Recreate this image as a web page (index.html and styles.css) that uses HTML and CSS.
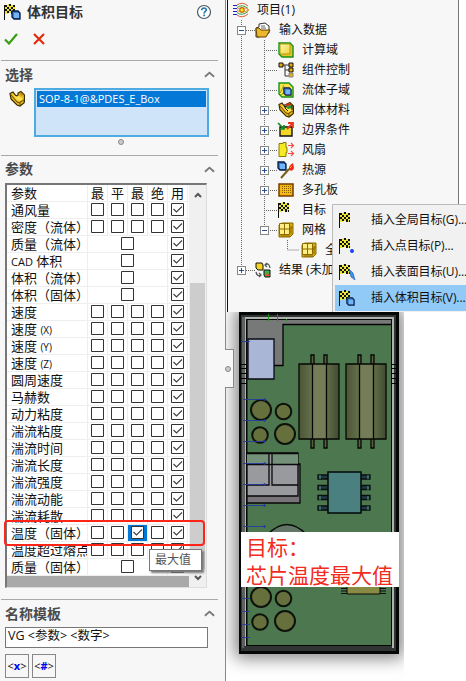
FILE: index.html
```html
<!DOCTYPE html>
<html lang="zh-CN">
<head>
<meta charset="utf-8">
<title>体积目标</title>
<link rel="stylesheet" href="styles.css">
</head>
<body>
<svg width="0" height="0" class="defs">
  <defs>
    <pattern id="dots" width="2" height="2" patternUnits="userSpaceOnUse"><rect width="2" height="2" fill="#f5bd19"/><path d="M0 0h1v1H0z" fill="#8a5c00"/></pattern>
    <linearGradient id="coil"><stop offset="0" stop-color="#4b5534"/><stop offset=".33" stop-color="#65704c"/><stop offset=".34" stop-color="#747d58"/><stop offset=".66" stop-color="#747d58"/><stop offset=".67" stop-color="#65704c"/><stop offset="1" stop-color="#414b30"/></linearGradient>
    <linearGradient id="yellow" x2="1" y2="1"><stop offset="0" stop-color="#fffab0"/><stop offset="1" stop-color="#f0d23c"/></linearGradient>
    <symbol id="flag" viewBox="0 0 16 16"><path d="M1 1h3V0h3v1h4v9H7V9H4v1H1z" fill="#efe63c"/><path d="M1 1h2v2H1zM5 0h2v2H5zM9 1h2v2H9zM3 3h2v2H3zM7 3h2v2H7zM1 5h2v2H1zM5 5h2v2H5zM9 5h2v2H9zM3 7h2v2H3zM7 7h2v3H7zM10 8h1v2h-1z" fill="#111"/><path d="M.5 1v15" stroke="#111"/></symbol>
    <symbol id="cube" viewBox="0 0 10 10"><path d="M1 1h6l2 2v6H3L1 7z" fill="#3a7ed0" stroke="#071b42" stroke-width="1.3"/><path d="M3 3h5v5H3z" fill="#72b4f4"/></symbol>
    <symbol id="part" viewBox="0 0 16 16"><path d="M1 2.500L4 1l3 4 2-1V2l3-1.500L15.500 4v6L15 12l-4 3-3-1-6-6z" fill="#e6b61d" stroke="#392b00" stroke-width="1.200"/><path d="M2 4l6 7 3 1M11 14v-3l4-2" fill="none" stroke="#6b4c00"/><path d="M3 3l5 6 3 1 3-2-4-3-2 1" fill="#ffe24f"/><path d="M10 2.500l2-1 2.500 2.500-2 1z" fill="#c0920e"/></symbol>
    <symbol id="mesh" viewBox="0 0 16 16"><path d="M1 3l3-2h11v11l-3 3H1z" fill="#d9a80b" stroke="#8a6c00"/><path d="M1.500 1.500h10v11h-10z" fill="#ffee86" stroke="#8c6b00"/><path d="M6.500 2v10M2 7h10M12 7l3-2M13 12V4M3 14h9" stroke="#8c6b00"/></symbol>
  </defs>
</svg>
<main class="app">
  <aside class="panel">
    <header class="title-row">
      <svg class="ic" viewBox="0 0 16 16"><use href="#flag" width="16" height="16"/><use href="#cube" x="7" y="6" width="10" height="10"/></svg>
      <h1>体积目标</h1>
      <svg class="help" viewBox="0 0 16 16"><circle cx="8" cy="8" r="6.5" fill="#fff" stroke="#4d5963" stroke-width="1.2"/><path d="M5.7 6.3c0-3.2 4.8-2.8 4.6-.3-.1 1.5-2.2 1.4-2.2 3.4M8.1 10.6v1.7" fill="none" stroke="#2379a9" stroke-width="1.7"/></svg>
    </header>
    <div class="actions">
      <svg width="14" height="12" viewBox="0 0 14 12"><path d="M1 6.5l4 4L13 1" fill="none" stroke="#379f10" stroke-width="2.2"/></svg>
      <svg width="12" height="12" viewBox="0 0 12 12"><path d="M1 1l10 10M11 1L1 11" stroke="#e12b09" stroke-width="2.2"/></svg>
    </div>
    <section class="selection">
      <div class="sec-head"><h2>选择</h2><svg class="chev" viewBox="0 0 12 7"><path d="M1 6l5-4.5L11 6"/></svg></div>
      <div class="pick"><svg class="ic" viewBox="0 0 16 16"><use href="#part"/></svg><div class="list"><div class="item">SOP-8-1@&amp;PDES_E_Box</div></div></div>
      <i class="knob"></i>
    </section>
    <section class="params">
      <div class="sec-head"><h2>参数</h2><svg class="chev" viewBox="0 0 12 7"><path d="M1 6l5-4.5L11 6"/></svg></div>
      <div class="grid">
        <div class="rows" id="rows"></div>
        <div class="scroll"><svg viewBox="0 0 8 6"><path d="M1 5l3-3 3 3"/></svg><div class="thumb"></div><svg viewBox="0 0 8 6"><path d="M1 1l3 3 3-3"/></svg></div>
        <div class="focus-ring"></div>
        <div class="tip">最大值</div>
      </div>
    </section>
    <section class="template">
      <div class="sec-head"><h2>名称模板</h2><svg class="chev" viewBox="0 0 12 7"><path d="M1 6l5-4.5L11 6"/></svg></div>
      <div class="field">VG &lt;参数&gt; &lt;数字&gt;</div>
      <div class="buttons"><span>&lt;<b>x</b>&gt;</span><span>&lt;<b>#</b>&gt;</span></div>
    </section>
  </aside>
  <div class="right">
    <div class="tree">
      <div class="node l0"><svg class="ic" viewBox="0 0 16 16"><g fill="none"><path d="M0 3.500h4M0 6.500h4M0 9.500h4M0 12.500h4" stroke="#2020c0"/><path d="M4 3q5-4 11 1M4 13q5 4 11-1" stroke="#e45730"/><path d="M4 5.500q5-4 11 1M4 10.500q5 4 11-1" stroke="#37a137"/><path d="M4 7.500q5-4 12 .5q-7 4-12 .5" stroke="#e48a30"/></g><circle cx="9" cy="8" r="2.300" fill="#ffe21b" stroke="#a54c00"/></svg><span>项目(1)</span></div>
      <div class="node l1"><i class="tg minus"></i><svg class="ic" viewBox="0 0 16 16"><path d="M1 6l3-1V2l6-1 4 3v7L4 15H1z" fill="#fff" stroke="#333"/><path d="M6 4h4M6 6h5" stroke="#666"/><path d="M1 6h3l2 2h9l-4 7H2z" fill="#edb72b" stroke="#644300"/></svg><span>输入数据</span></div>
      <div class="node l2"><svg class="ic" viewBox="0 0 16 16"><path d="M1 1h11l3 3v11H4l-3-3z" fill="#e5c328" stroke="#159215" stroke-width="1.4"/><path d="M2 2h10v10H2z" fill="url(#yellow)" stroke="#b69a12"/></svg><span>计算域</span></div>
      <div class="node l2"><svg class="ic" viewBox="0 0 16 16"><path d="M4 3h8M7 3v11h5M7 8h5" fill="none" stroke="#333"/><g fill="#e7ab12" stroke="#111"><path d="M1 1h4v4H1zM11 1h4v4h-4zM11 6h4v4h-4z"/><path d="M11 11h4v4h-4z" stroke="#888"/></g></svg><span>组件控制</span></div>
      <div class="node l2"><svg class="ic" viewBox="0 0 16 16"><path d="M1 1h10l4 4v10H4l-3-3z" fill="#f7e44b" stroke="#159215" stroke-width="1.4"/><path d="M2 11l4-8M3 13l5-4" stroke="#9b9b20"/><use href="#cube" x="5" y="5" width="9" height="9"/></svg><span>流体子域</span></div>
      <div class="node l2"><i class="tg"></i><svg class="ic" viewBox="0 0 16 16"><use href="#part"/><path d="M7 3l2-2 5 1-2 2z" fill="#d32b12"/><path d="M8 5l5-2 1 3-4 1z" fill="#26973a"/><path d="M7 2v4l3 3M14 3v5" fill="none" stroke="#111"/></svg><span>固体材料</span></div>
      <div class="node l2"><i class="tg"></i><svg class="ic" viewBox="0 0 16 16"><path d="M2 5h12v9H2z" fill="#f3d526" stroke="#111" stroke-width="1.4"/><path d="M0 1l6 6M6 3v4H2" stroke="#138b25" stroke-width="1.7" fill="none"/><path d="M9 7l5-5M10 1h5v5" stroke="#e63622" stroke-width="1.8" fill="none"/></svg><span>边界条件</span></div>
      <div class="node l2"><i class="tg"></i><svg class="ic" viewBox="0 0 16 16"><path d="M1 1.500h4v-1h3v5h1v5H8v4H1z" fill="#f6ea22" stroke="#8a7c00"/><path d="M10 3.500h5M10 11.500h5M13 1l2.500 2.500L13 6M13 9l2.500 2.500L13 14" stroke="#ec5246" stroke-width="1.2" fill="none"/></svg><span>风扇</span></div>
      <div class="node l2"><i class="tg"></i><svg class="ic" viewBox="0 0 16 16"><use href="#cube" x="-1" y="-1" width="10" height="10"/><path d="M3 16l8-9" stroke="#756218" stroke-width="2"/><path d="M11 8q-1-4 4-7l1 5q-1 4-5 2" fill="#ef2c11"/><path d="M12 6l2-2" stroke="#ffae22"/></svg><span>热源</span></div>
      <div class="node l2"><i class="tg"></i><svg class="ic" viewBox="0 0 16 16"><path d="M1 2h14v12H1z" fill="#f4b50b" stroke="#743d00" stroke-width="1.5"/><path d="M3 4h10v8H3z" fill="url(#dots)"/></svg><span>多孔板</span></div>
      <div class="node l2"><svg class="ic" viewBox="0 0 16 16"><use href="#flag"/></svg><span>目标</span></div>
      <div class="node l2"><i class="tg minus"></i><svg class="ic" viewBox="0 0 16 16"><use href="#mesh"/></svg><span>网格</span></div>
      <div class="node l3"><svg class="ic" viewBox="0 0 16 16"><use href="#mesh"/></svg><span>全局网格</span></div>
      <div class="node l1"><i class="tg"></i><svg class="ic" viewBox="0 0 16 16"><path d="M1 1h6l1 2v5H3L1 6z" fill="#f5d41e" stroke="#111"/><path d="M9 8h6v7h-5L9 13z" fill="#39b54a" stroke="#111"/><path d="M12 10l3 4h-4z" fill="#f34823"/><path d="M10 3q4-3 5 3M12 1l-2 2 2 2M6 13q-4 2-5-3M4 11l2 2-2 2" fill="none" stroke="#555" stroke-width="1.3"/></svg><span>结果 (未加载)</span></div>
      <svg class="guides" width="100" height="280"><path d="M13.5 20v250M36.5 40v190M59.5 240v10h12"/><path d="M18 30.5h9M38 50.5h12M38 70.5h12M38 90.5h12M42 110.5h8M42 130.5h8M42 150.5h8M42 170.5h8M42 190.5h8M38 210.5h12M42 230.5h8M18 270.5h9"/></svg>
    </div>
    <div class="menu">
      <div><svg class="ic" viewBox="0 0 16 16"><use href="#flag"/></svg><span>插入全局目标(G)...</span></div>
      <div><svg class="ic" viewBox="0 0 16 16"><use href="#flag"/><circle cx="13" cy="13" r="2" fill="#1844ef"/></svg><span>插入点目标(P)...</span></div>
      <div><svg class="ic" viewBox="0 0 16 16"><use href="#flag"/><path d="M10 5l4 4 2 7-4-3z" fill="#3e8eea" stroke="#2058b0" stroke-width=".6"/></svg><span>插入表面目标(U)...</span></div>
      <div class="on"><svg class="ic" viewBox="0 0 16 16"><use href="#flag"/><use href="#cube" x="7" y="7" width="9" height="9"/></svg><span>插入体积目标(V)...</span></div>
    </div>
    <div class="model">
      <svg class="board" width="160" height="342" viewBox="239 312 160 342">
        <path d="M239 312h160v342H239z" fill="#050606"/>
        <path d="M241 315h155v336H241z" fill="#303433"/>
        <path d="M244 317h150v331H244z" fill="#b0b2b0"/>
        <path d="M242 317h3v331h-3z" fill="#5d6261"/>
        <path d="M244 646h148v3H244z" fill="#303433"/>
        <path d="M246 319h146v327H246z" fill="#050606"/>
        <path d="M247.5 320h143.500v325H247.500z" fill="#4d774e"/>
        <path d="M248 320h143v4H283v41H248z" fill="#777979"/>
        <path d="M391 324.500H283v41H274" fill="none" stroke="#000" stroke-width="1.300"/>
        <path d="M268.500 314v7M277.500 314v7M286.500 319v2" stroke="#178e16"/>
        <path d="M248 339h26v40H248z" fill="#aab6d5" stroke="#090b13" stroke-width="1.300"/>
        <g id="coilpart">
          <path d="M311 355h3v93h-3zM324 355h3v93h-3z" fill="#59603f" stroke="#050704" stroke-width="1.300"/>
          <path d="M299 364h40v75h-40z" fill="url(#coil)" stroke="#050704" stroke-width="1.300"/>
          <path d="M312.500 364v75M326.500 364v75" stroke="#050704" stroke-width="1.300"/>
        </g>
        <use href="#coilpart" x="47"/>
        <g id="caps" fill="#65703d" stroke="#0d120b" stroke-width="2">
          <circle cx="261" cy="410" r="10"/><circle cx="283.500" cy="411.500" r="7.800"/><circle cx="260" cy="435" r="7.800"/><circle cx="285" cy="434" r="10"/>
        </g>
        <use href="#caps" y="187"/>
        <path d="M247 464h53v39h-53z" fill="#78747a" stroke="#080808" stroke-width="1.300"/>
        <path d="M247 453h51v43h-51z" fill="#999a9d" stroke="#080808" stroke-width="1.300"/>
        <path d="M247 453h22v12h-22zM272 453h26v12h-26z" fill="#749279"/>
        <path d="M247 453.500h51M247 464.500h53M247 485h22v-32M272 453v32h26" fill="none" stroke="#080808" stroke-width="1.300"/>
        <path d="M318 475h52v4h-52zM318 485.500h52v4h-52zM318 495.500h52v4h-52zM318 506h52v4h-52z" fill="#243849" stroke="#06110b" stroke-width="1.300"/>
        <path d="M320 475v4M320 486v4M320 496v4M320 506v4M368 475v4M368 486v4M368 496v4M368 506v4" stroke="#5d9c89"/>
        <path d="M328 472h33v41h-33z" fill="#4a8180" stroke="#020808" stroke-width="1.500"/>
        <path d="M267 535q20-21 40 0z" fill="#637566" stroke="#070b07" stroke-width="1.300"/>
        <path d="M341 588.500h45M341 591h45M341 593.500h45" stroke="#0a0d09" stroke-width="1.200"/>
        <path d="M347 580h33v14h-33z" fill="#898a43" stroke="#0a0d09"/>
        <g stroke="#263b9e" stroke-width=".9"><path d="M243 399.500h23M243 420.500h23M243 441.500h23M243 463.500h23M243 484.500h23M243 505.500h23M243 526.500h23"/><path d="M242 341.500h8M242 598.500h8M242 611.500h8M242 624.500h8M242 637.500h8"/><path d="M264 398.500l2 1-2 1zM264 419.500l2 1-2 1zM264 440.500l2 1-2 1zM264 462.500l2 1-2 1zM264 483.500l2 1-2 1zM264 504.500l2 1-2 1zM264 525.500l2 1-2 1z" fill="#263bae"/></g>
        <path d="M241 364.500h6M241 368.500h6M241 373.500h6M241 378.500h6M241 383.500h6M391 364.500h6M391 368.500h6M391 373.500h6M391 378.500h6M391 383.500h6" stroke="#000"/>
      </svg>
      <div class="note">目标：<br>芯片温度最大值</div>
    </div>
  </div>
  <div class="handle"><i class="knob"></i></div>
</main>
<script src="app.js"></script>
</body>
</html>
```
FILE: app.js
```js
const rows = [
  ["通风量", 4], ["密度（流体）", 4], ["质量（流体）", 1], ["<small class=\"cad\">CAD</small> 体积", 1], ["体积（流体）", 1], ["体积（固体）", 1],
  ["速度", 4], ["速度 <small>(X)</small>", 4], ["速度 <small>(Y)</small>", 4], ["速度 <small>(Z)</small>", 4],
  ["圆周速度", 4], ["马赫数", 4], ["动力粘度", 4], ["湍流粘度", 4], ["湍流时间", 4], ["湍流长度", 4],
  ["湍流强度", 4], ["湍流动能", 4], ["湍流耗散", 4], ["温度（固体）", 4, 2], ["温度超过熔点", 4], ["质量（固体）", 1]
];
const box = on => `<svg class="box" viewBox="0 0 13 13"><path d="M.5.5h12v12H.5z" fill="#fff" stroke="#333"/>${on ? '<path d="M2.500 6l3 3 5.500-5.500" fill="none" stroke="#444" stroke-width="1.200"/>' : ""}</svg>`;
let html = '<div class="row head"><span class="name">参数</span>' + ["最", "平", "最", "绝", "用"].map(t => `<span class="cell">${t}</span>`).join("") + "</div>";
for (const [name, count, checked] of rows) {
  let cells = "";
  if (count === 1) cells = `<span class="cell wide">${box(false)}</span>`;
  else for (let i = 0; i < 4; i++) cells += `<span class="cell${i === checked ? " active" : ""}">${box(i === checked)}</span>`;
  html += `<div class="row"><span class="name">${name}</span>${cells}<span class="cell">${box(true)}</span></div>`;
}
document.getElementById("rows").innerHTML = html;
```
FILE: styles.css
```css
* { box-sizing: border-box; }
body { margin: 0; background: #fff; color: #111; font: 13px/17px "Open Sans", "Noto Sans CJK SC", sans-serif; }
h1, h2 { margin: 0; white-space: nowrap; }
.defs { position: absolute; }
.app { position: relative; display: flex; width: 466px; height: 681px; overflow: hidden; }
.panel { width: 226px; flex: none; height: 681px; background: #f7f7f7; border-right: 1px solid #888; }
.ic { width: 16px; height: 16px; flex: none; overflow: visible; }
.title-row { display: flex; align-items: center; height: 24px; padding-left: 4px; }
h1 { margin-left: 7px; font-size: 14px; line-height: 20px; color: #333; flex: 1; }
.help { width: 16px; height: 16px; margin-right: 13px; }
.actions { height: 36px; display: flex; gap: 15px; padding: 9px 4px; align-items: flex-start; }
section { width: 217px; margin-left: 1px; border-top: 1px solid #a9a9a9; }
.sec-head { display: flex; align-items: center; justify-content: space-between; padding: 0 3px 0 4px; height: 27px; }
h2 { font-size: 14px; line-height: 20px; color: #4b4b4b; }
.chev { width: 11px; height: 7px; fill: none; stroke: #777; stroke-width: 2; }
.selection { height: 95px; }
.pick { display: flex; padding-left: 8px; gap: 9px; }
.pick .ic { margin-top: 3px; }
.list { width: 175px; height: 49px; border: 2px solid #4eabe2; padding: 1px; background: #cfe4f8; }
.item { background: #0378d7; color: #fff; height: 16px; line-height: 15px; padding-left: 2px; font-size: 11px; }
.knob { display: block; width: 6px; height: 6px; border: 1px solid #888; border-radius: 50%; background: #ccc; }
.selection .knob { margin: 2px auto 0 117px; }
.params { height: 444px; }
.grid { position: relative; width: 202px; height: 405px; margin: 1px 0 0 4px; border: 1px solid #777; border-width: 2px 1px 1px 2px; border-right-color: #ddd; border-bottom-color: #ddd; display: flex; background: #a9a9a9; }
.params .sec-head { height: 26px; }
.rows { width: 182px; height: 391px; overflow: hidden; background: #fff; }
.row { display: grid; grid-template-columns: 81px repeat(5, 20px); height: 17px; border-bottom: 1px solid #eee; }
.name { padding-left: 4px; overflow: hidden; white-space: nowrap; line-height: 16px; border-right: 1px solid #eee; }
.name small { font-size: 10px; }
.name .cad { font-size: 11px; }
.cell { display: flex; justify-content: center; align-items: flex-start; border-right: 1px solid #eee; overflow: hidden; padding-top: 1px; }
.head .cell { padding-top: 0; line-height: 16px; }
.wide { grid-column: span 4; }
.active { background: #0378d7; }
.box { width: 13px; height: 13px; flex: none; }
.scroll { width: 17px; height: 402px; background: #f0f0f0; display: flex; flex-direction: column; align-items: center; padding: 7px 0 6px; }
.scroll svg { width: 8px; height: 6px; fill: none; stroke: #555; stroke-width: 2; flex: none; }
.thumb { width: 15px; flex: 1; margin: 85px 0 6px; background: #cdcdcd; }
.focus-ring { position: absolute; left: -3px; top: 335px; width: 201px; height: 26px; border: 2px solid #ff2418; border-radius: 4px; }
.tip { position: absolute; left: 142px; top: 364px; width: 53px; height: 22px; border: 1px solid #777; background: #fff; color: #555; font-size: 12px; line-height: 19px; padding-left: 5px; box-shadow: 2px 2px 2px #777; }
.template { height: 82px; }
.field { margin-left: 4px; width: 203px; height: 21px; border: 1px solid #777; background: #fff; padding-left: 2px; line-height: 16px; font-size: 12.500px; }
.buttons { display: flex; gap: 3px; margin: 6px 0 0 4px; }
.buttons span { width: 24px; height: 24px; border: 1px solid #888; font-size: 11px; line-height: 22px; text-align: center; }
.buttons b { color: #00e; }
.right { position: relative; width: 240px; height: 681px; background: #fff; }
.tree { position: relative; width: 232px; height: 312px; margin-left: 1px; background: #f7f7f7; border-left: 1px solid #111; border-right: 1px solid #777; }
.node { height: 20px; display: flex; align-items: center; white-space: nowrap; font-size: 12px; }
.node span { margin-left: 8px; position: relative; top: -1px; }
.l0 { padding-left: 5px; }
.l1 { padding-left: 27px; }
.l2 { padding-left: 50px; }
.l3 { padding-left: 73px; }
.tg { width: 9px; height: 9px; margin-left: -18px; margin-right: 9px; border: 1px solid #888; background: linear-gradient(#2b4d91, #2b4d91) center / 5px 1px no-repeat, linear-gradient(#2b4d91, #2b4d91) center / 1px 5px no-repeat, #fff; z-index: 1; }
.tg.minus { background: linear-gradient(#2b4d91, #2b4d91) center / 5px 1px no-repeat, #fff; }
.guides { position: absolute; left: 0; top: 0; fill: none; stroke: #666; stroke-dasharray: 1 1; }
.menu { position: absolute; left: 106px; top: 204px; width: 134px; height: 108px; background: #f1f1f1; border: 1px solid #bbb; border-right: 0; border-bottom: 0; padding: 2px 0 0 2px; z-index: 2; }
.menu div { display: flex; align-items: center; height: 26px; padding-left: 4px; white-space: nowrap; font-size: 12px; }
.menu span { margin-left: 16px; position: relative; top: -1px; letter-spacing: -.1px; }
.menu .on { background: #91c9f7; }
.model { position: relative; width: 178px; height: 369px; padding-left: 13px; background: #fff; overflow: hidden; }
.board { display: block; box-shadow: 0 0 16px 4px rgba(0, 0, 0, .5); }
.note { position: absolute; left: 15px; top: 220px; width: 158px; height: 55px; background: #fff; color: #f22b20; font: 21px/28px "Noto Sans CJK SC", sans-serif; padding-left: 5px; white-space: nowrap; }
.handle { position: absolute; left: 225px; top: 349px; width: 9px; height: 39px; border: 1px solid #888; border-left: 0; background: #f7f7f7; display: flex; align-items: center; }
```
